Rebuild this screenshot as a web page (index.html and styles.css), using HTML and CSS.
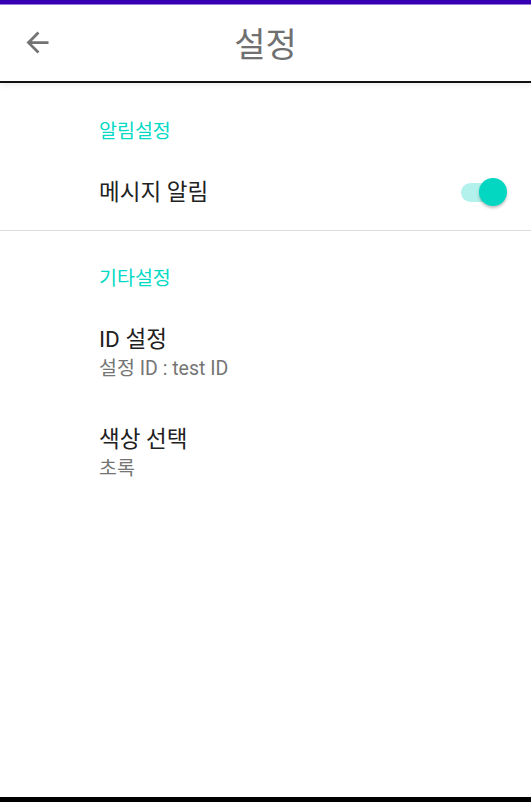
FILE: index.html
```html
<!DOCTYPE html>
<html lang="ko">
<head>
<meta charset="utf-8">
<link rel="stylesheet" href="styles.css">
</head>
<body>
<div class="status"></div>
<header class="toolbar">
  <button class="back" aria-label="back">
    <svg width="33" height="33" viewBox="0 0 24 24"><path d="M20 11H7.83l5.59-5.59L12 4l-8 8 8 8 1.41-1.41L7.83 13H20v-2z" fill="#737373"/></svg>
  </button>
  <h1 class="title">설정</h1>
</header>
<main class="content">
  <section class="group first">
    <div class="cat">알림설정</div>
    <div class="switch-row">
      <div class="label">메시지 알림</div>
      <div class="switch"><span class="track"></span><span class="thumb"></span></div>
    </div>
  </section>
  <div class="divider"></div>
  <section class="group second">
    <div class="cat">기타설정</div>
    <div class="pref">
      <div class="label">ID 설정</div>
      <div class="summary">설정 ID : test ID</div>
    </div>
    <div class="pref">
      <div class="label">색상 선택</div>
      <div class="summary">초록</div>
    </div>
  </section>
</main>
<div class="navbar"></div>
</body>
</html>
```
FILE: styles.css
```css
html, body {
  margin: 0;
  padding: 0;
  height: 100%;
}
body {
  width: 531px;
  height: 802px;
  display: flex;
  flex-direction: column;
  background: #fff;
  font-family: Roboto, "Noto Sans CJK KR", sans-serif;
  overflow: hidden;
}
.status {
  height: 4px;
  background: #3700b3;
  border-bottom: 1px solid #9c7fe0;
}
.toolbar {
  position: relative;
  height: 76px;
  display: flex;
  align-items: center;
  justify-content: center;
  border-bottom: 2px solid #111;
  box-shadow: 0 2px 6px rgba(0,0,0,0.08);
}
.back {
  position: absolute;
  left: 21px;
  top: 21px;
  width: 33px;
  height: 33px;
  padding: 0;
  border: 0;
  background: none;
  display: flex;
}
.title {
  margin: 0;
  font-weight: 400;
  font-size: 34px;
  line-height: 40px;
  color: #707070;
  font-family: "Noto Sans CJK KR", sans-serif;
}
.content {
  flex: 1;
}
.group {
  padding-left: 99px;
}
.cat {
  color: #03dac5;
  font-size: 19.5px;
  font-family: "Noto Sans CJK KR", sans-serif;
  line-height: 28px;
}
.first .cat {
  padding-top: 33px;
}
.second .cat {
  padding-top: 32px;
}
.switch-row {
  display: flex;
  align-items: center;
  justify-content: space-between;
  padding: 33px 24px 23px 0;
}
.label {
  font-size: 22.5px;
  color: #212121;
  line-height: 30px;
}
.summary {
  font-size: 19.5px;
  color: #757575;
  line-height: 26px;
  padding-top: 2px;
}
.switch {
  position: relative;
  width: 48px;
  height: 30px;
}
.track {
  position: absolute;
  left: 2px;
  top: 6px;
  width: 40px;
  height: 19px;
  border-radius: 10px;
  background: #b3f2ec;
}
.thumb {
  position: absolute;
  right: 0;
  top: 1px;
  width: 28px;
  height: 28px;
  border-radius: 50%;
  background: #03d7c2;
  box-shadow: 0 2px 3px rgba(0,0,0,0.25);
}
.divider {
  height: 1px;
  background: #dcdcdc;
}
.pref {
  padding: 33px 0 9px;
}
.navbar {
  height: 5px;
  background: #000;
}
```
